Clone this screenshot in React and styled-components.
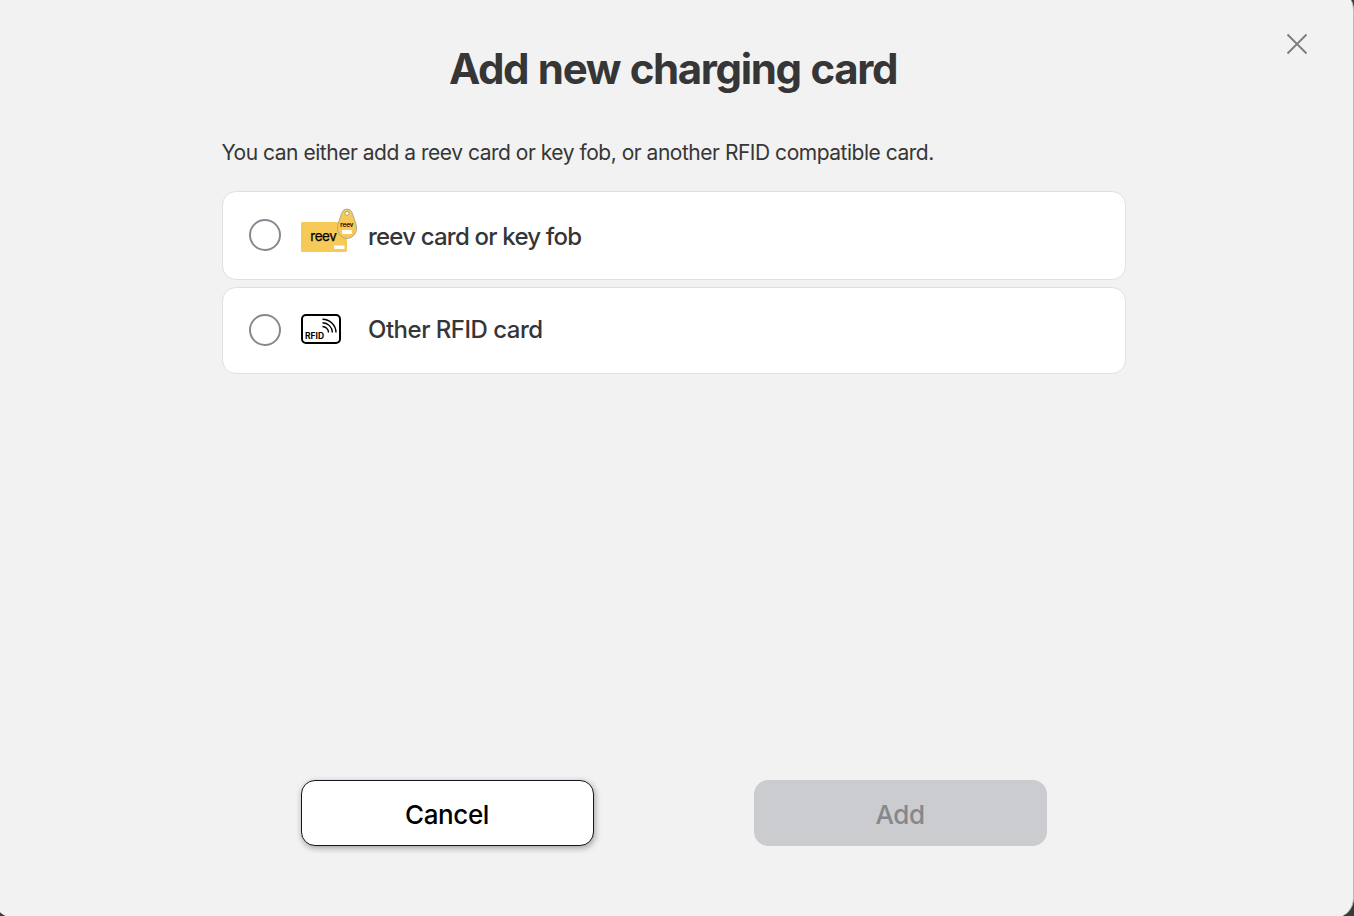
import React, { useState } from "react";
import styled, { createGlobalStyle } from "styled-components";

const GlobalStyle = createGlobalStyle`
  * {
    box-sizing: border-box;
  }
  body {
    margin: 0;
    background-color: #3a3a3a;
    font-family: Inter, "Liberation Sans", sans-serif;
    overflow: hidden;
  }
`;

const Backdrop = styled.div`
  width: 1354px;
  height: 916px;
  overflow: hidden;
  background-color: #3a3a3a;
`;

const Dialog = styled.div`
  width: 1360px;
  height: 928px;
  margin: -10px 0 0 -6px;
  padding: 10px 0 0 6px;
  border-right: 1px solid #bdbdbd;
  border-radius: 20px;
  background-color: #f2f2f2;
  display: flex;
  flex-direction: column;
`;

const Header = styled.header`
  height: 139px;
  display: grid;
  grid-template-columns: 96px 1fr 96px;
  align-items: start;
`;

const Title = styled.h2`
  grid-column: 2;
  margin: 0 0 0 -7px;
  padding-top: 43px;
  font-size: 42px;
  font-weight: 700;
  line-height: 52px;
  letter-spacing: -1.35px;
  word-spacing: 1px;
  text-align: center;
  white-space: nowrap;
  color: #363636;
`;

const CloseButton = styled.button`
  justify-self: start;
  margin: 32px 0 0 28px;
  padding: 0;
  width: 24px;
  height: 24px;
  border: none;
  background: none;
  color: #7c7c7c;
`;

const Content = styled.main`
  width: 904px;
  height: 641px;
  margin-left: 222px;
`;

const Intro = styled.p`
  margin: 0 0 38px -0.6px;
  height: 14px;
  font-size: 21px;
  line-height: 28px;
  letter-spacing: -0.48px;
  white-space: nowrap;
  color: #363636;
`;

const Options = styled.div`
  display: flex;
  flex-direction: column;
  gap: 7px;
`;

const Option = styled.label`
  display: flex;
  align-items: flex-start;
  height: ${({ $height }) => $height};
  padding: ${({ $top }) => $top} 0 0 26px;
  border: 1px solid #e0e0e0;
  border-radius: 14px;
  background-color: #fff;
`;

const Radio = styled.input`
  appearance: none;
  width: 32px;
  height: 32px;
  margin: 0 20px 0 0;
  border: 2px solid #868a90;
  border-radius: 50%;
  background-color: #fff;

  &:checked {
    border-width: 10px;
  }
`;

const Picture = styled.span`
  width: 67px;
  height: 52px;
  margin-top: ${({ $shift }) => $shift};

  svg {
    display: block;
    overflow: visible;
  }
`;

const Label = styled.span`
  margin-top: ${({ $shift }) => $shift};
  font-size: 24px;
  font-weight: 500;
  line-height: 32px;
  letter-spacing: ${({ $spacing }) => $spacing};
  white-space: nowrap;
  color: #363636;
`;

const Footer = styled.footer`
  display: flex;
  gap: 160px;
  margin-left: 301px;
`;

const Button = styled.button`
  width: 293px;
  height: 66px;
  padding: 3px 1px 0 0;
  border: 1px solid #15141f;
  border-radius: 14px;
  background-color: #fff;
  box-shadow: 1px 2px 6px rgba(0, 0, 0, 0.35);
  font-family: inherit;
  font-size: 26px;
  font-weight: 500;
  letter-spacing: -0.4px;
  color: #000;

  &:disabled {
    border-color: #cbccd0;
    background-color: #cbccd0;
    box-shadow: none;
    color: #86878b;
  }
`;

const CloseIcon = () => (
  <svg width="24" height="24" viewBox="0 0 24 24" fill="none">
    <path d="M2.5 2.5l19 19M21.5 2.5l-19 19" stroke="currentColor" strokeWidth="1.8" />
  </svg>
);

const ReevIcon = () => (
  <svg width="58" height="46" viewBox="0 0 58 46" fontFamily="Inter, sans-serif">
    <rect x="0" y="14" width="46" height="30" rx="1.5" fill="#f7ca58" />
    <text x="9.3" y="32.7" fontSize="13.5" textLength="26.5" fill="#000" stroke="#000" strokeWidth="0.25">
      reev
    </text>
    <rect x="33" y="37.5" width="10.5" height="3.5" fill="#fff" />
    <path
      d="M46 1.2c3 0 4.6 1.5 5.4 4.3l3.6 10.8c2.2 7-2.3 14.1-9 14.1s-11.2-7.1-9-14.1l3.6-10.8c.8-2.8 2.4-4.3 5.4-4.3z"
      fill="#f7ca58"
      stroke="#b3a68a"
      strokeWidth="1"
    />
    <circle cx="46" cy="5.3" r="2" fill="#fff" stroke="#aaa08a" strokeWidth="1" />
    <text x="39.2" y="18.7" fontSize="6.2" textLength="13" fill="#000" stroke="#000" strokeWidth="0.2">
      reev
    </text>
    <rect x="41" y="22" width="10" height="4" fill="#fff" />
  </svg>
);

const RfidIcon = () => (
  <svg width="40" height="30" viewBox="0 0 40 30" fill="none">
    <rect x="1" y="1" width="38" height="28" rx="4" stroke="#000" strokeWidth="2" />
    <g stroke="#000" strokeWidth="1.4">
      <path d="M21.5 5.2c7.2 0 13.3 5.7 13.5 13.3" />
      <path d="M21.5 8.8c5.5 0 9.7 4.3 9.9 9.7" />
      <path d="M21.5 12.5c3.2 0 5.9 2.6 6.1 6" />
    </g>
    <text
      x="4"
      y="24.8"
      fontFamily="Inter, sans-serif"
      fontSize="8.4"
      fontWeight="700"
      textLength="19"
      lengthAdjust="spacingAndGlyphs"
      fill="#000"
    >
      RFID
    </text>
  </svg>
);

export default function App() {
  const [selected, setSelected] = useState(null);
  return (
    <>
      <GlobalStyle />
      <Backdrop>
        <Dialog>
          <Header>
            <Title>Add new charging card</Title>
            <CloseButton aria-label="Close">
              <CloseIcon />
            </CloseButton>
          </Header>
          <Content>
            <Intro>You can either add a reev card or key fob, or another RFID compatible card.</Intro>
            <Options>
              <Option $height="89px" $top="27px">
                <Radio
                  type="radio"
                  name="card"
                  checked={selected === "reev"}
                  onChange={() => setSelected("reev")}
                />
                <Picture $shift="-11px">
                  <ReevIcon />
                </Picture>
                <Label $shift="2px" $spacing="-0.8px">
                  reev card or key fob
                </Label>
              </Option>
              <Option $height="87px" $top="26px">
                <Radio
                  type="radio"
                  name="card"
                  checked={selected === "other"}
                  onChange={() => setSelected("other")}
                />
                <Picture $shift="0">
                  <RfidIcon />
                </Picture>
                <Label $shift="0" $spacing="-0.5px">
                  Other RFID card
                </Label>
              </Option>
            </Options>
          </Content>
          <Footer>
            <Button>Cancel</Button>
            <Button disabled={!selected}>Add</Button>
          </Footer>
        </Dialog>
      </Backdrop>
    </>
  );
}
